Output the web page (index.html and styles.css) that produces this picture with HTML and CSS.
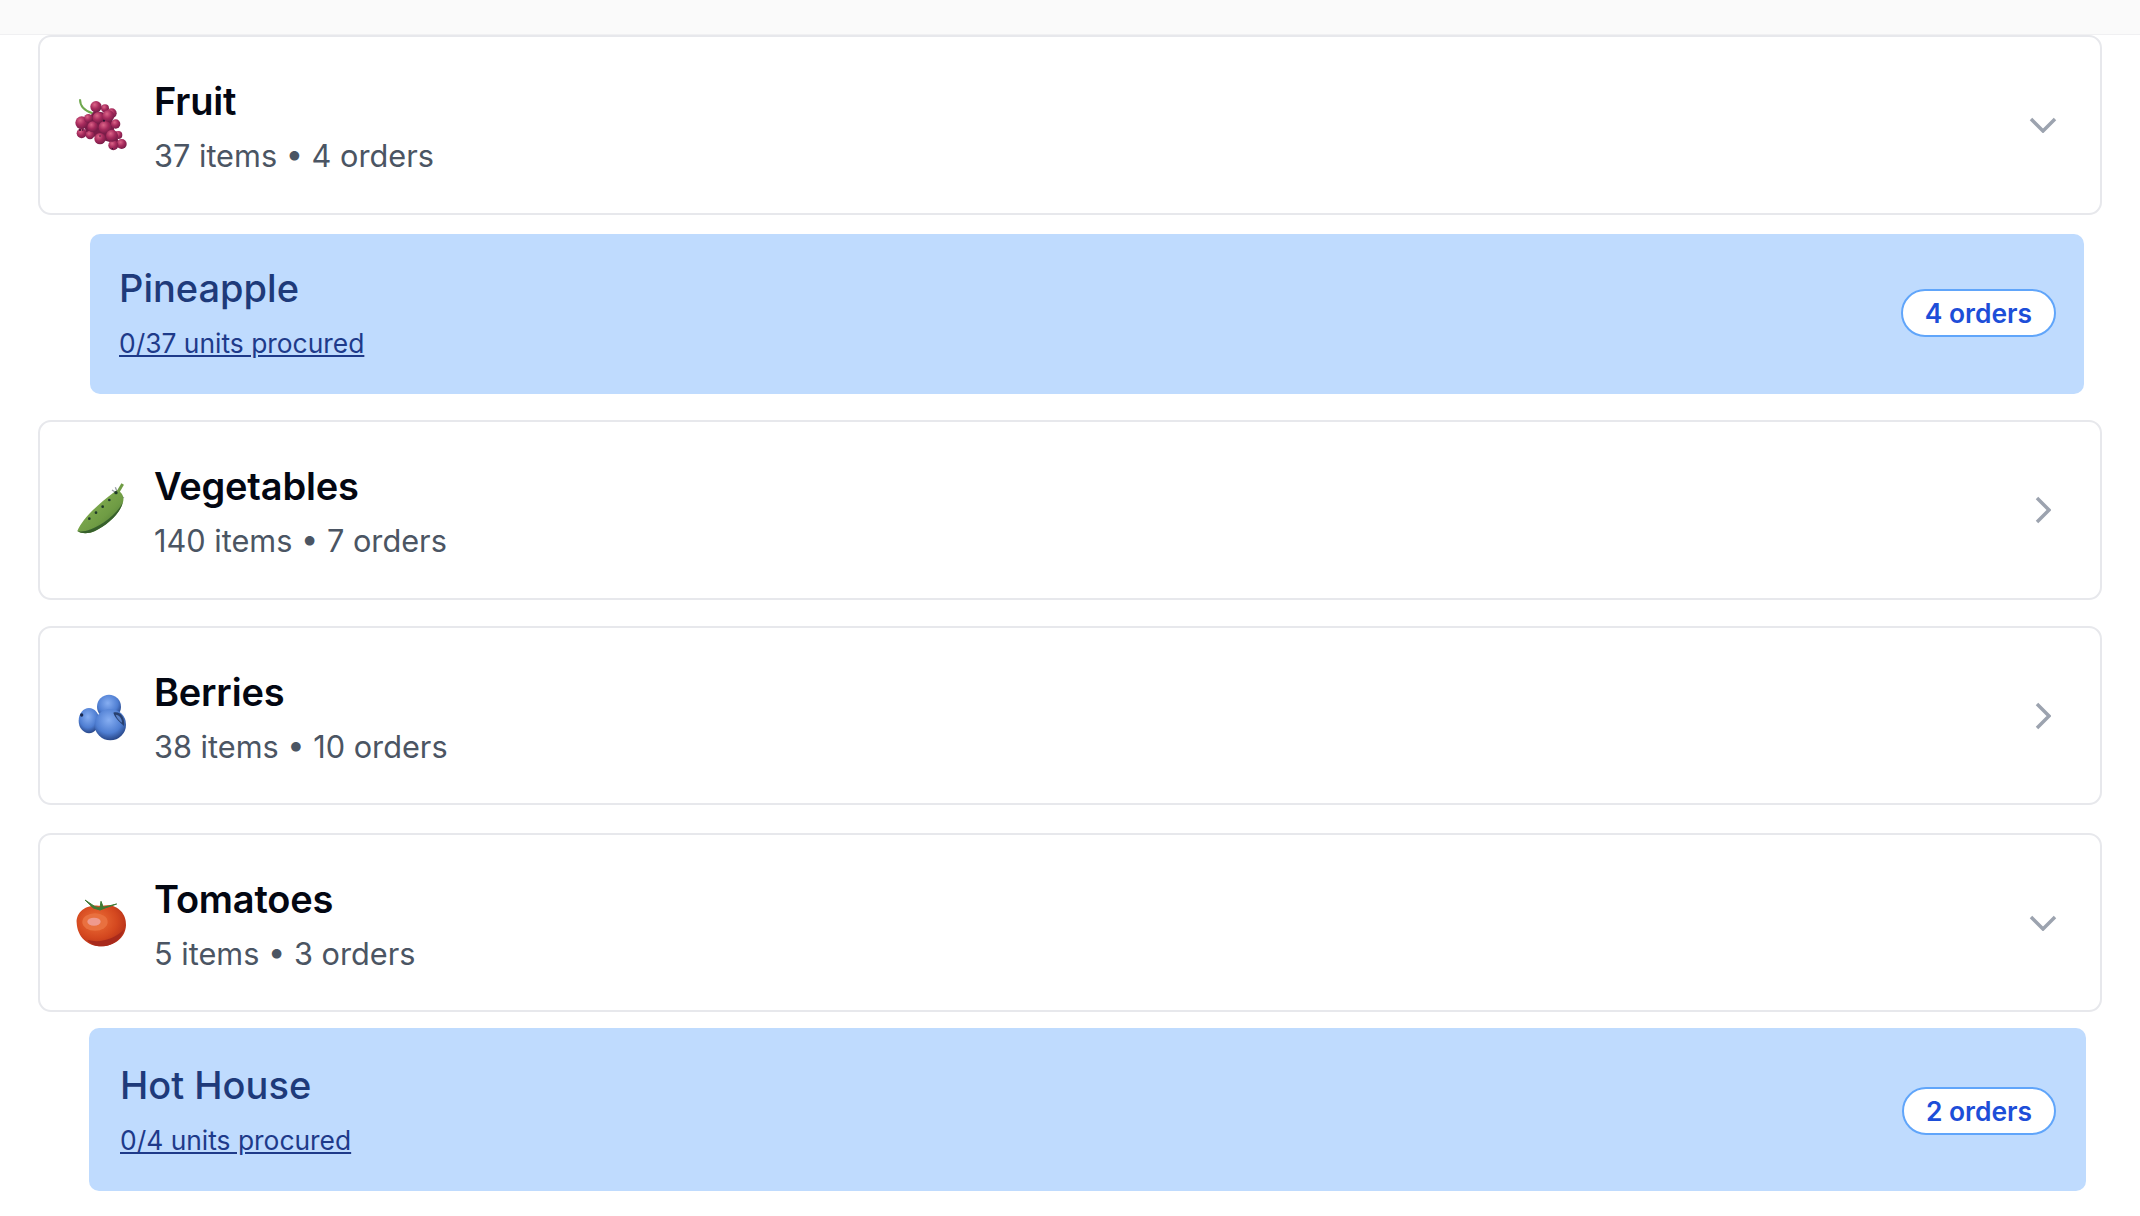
FILE: index.html
```html
<!DOCTYPE html>
<html lang="en">
<head>
    <meta charset="UTF-8">
    <meta name="viewport" content="width=device-width, initial-scale=1.0">
    <title>Procurement</title>
    <link rel="stylesheet" href="styles.css">
</head>
<body>
    <div class="topbar"></div>
    <div class="list">
        <div class="card card-fruit">
            <svg class="thumb" viewBox="60 45 180 180">
                <defs>
                    <radialGradient id="grape" cx="38%" cy="32%" r="75%">
                        <stop offset="0" stop-color="#dc6488"/>
                        <stop offset=".5" stop-color="#a62a5c"/>
                        <stop offset="1" stop-color="#6f1a44"/>
                    </radialGradient>
                    <radialGradient id="berry" cx="45%" cy="35%" r="70%">
                        <stop offset="0" stop-color="#86aef2"/>
                        <stop offset=".6" stop-color="#4f7ed2"/>
                        <stop offset="1" stop-color="#1f3a78"/>
                    </radialGradient>
                    <radialGradient id="tomato" cx="40%" cy="38%" r="70%">
                        <stop offset="0" stop-color="#ee7038"/>
                        <stop offset=".6" stop-color="#d4481f"/>
                        <stop offset="1" stop-color="#b02c18"/>
                    </radialGradient>
                    <linearGradient id="pod" x1="0" y1="0" x2="1" y2="1">
                        <stop offset="0" stop-color="#8fb85a"/>
                        <stop offset=".6" stop-color="#6f9c44"/>
                        <stop offset="1" stop-color="#3f6a2e"/>
                    </linearGradient>
                </defs>
                <path d="M90 58C90 76 100 92 128 100" fill="none" stroke="#6fa84e" stroke-width="6"/>
                <path d="M105 130L135 95L180 105L190 150L205 190L150 175L110 155Z" fill="#7a1c48" stroke="#7a1c48" stroke-width="6" stroke-linejoin="round"/>
                <g fill="url(#grape)">
                    <circle cx="95" cy="160" r="15"/>
                    <circle cx="120" cy="165" r="13"/>
                    <circle cx="150" cy="176" r="17"/>
                    <circle cx="215" cy="192" r="15"/>
                    <circle cx="190" cy="196" r="15"/>
                    <circle cx="205" cy="165" r="12"/>
                    <circle cx="165" cy="85" r="12"/>
                    <circle cx="197" cy="132" r="14"/>
                    <circle cx="185" cy="100" r="15"/>
                    <circle cx="138" cy="80" r="17"/>
                    <circle cx="95" cy="128" r="19"/>
                    <circle cx="115" cy="115" r="13"/>
                    <circle cx="128" cy="140" r="16"/>
                    <circle cx="145" cy="113" r="17"/>
                    <circle cx="175" cy="108" r="18"/>
                    <circle cx="165" cy="142" r="19"/>
                    <circle cx="186" cy="167" r="18"/>
                </g>
                <g fill="#2a1030">
                    <circle cx="162" cy="122" r="3"/>
                    <circle cx="90" cy="150" r="3"/>
                    <circle cx="98" cy="150" r="2"/>
                    <circle cx="150" cy="168" r="2"/>
                    <circle cx="187" cy="206" r="2"/>
                </g>
            </svg>
            <div class="card-text">
                <div class="card-title">Fruit</div>
                <div class="card-meta">37 items • 4 orders</div>
            </div>
            <svg class="chevron" viewBox="0 0 28 16"><path d="M2 2l12 12L26 2"/></svg>
        </div>
        <div class="group group-first">
            <div>
                <div class="group-title">Pineapple</div>
                <a class="group-link">0/37 units procured</a>
            </div>
            <span class="badge">4 orders</span>
        </div>

        <div class="card card-veg">
            <svg class="thumb" viewBox="60 30 180 180">
                <path d="M186 60l36 24M196 52l8 20" stroke="#9aa0a8" stroke-width="4" fill="none"/>
                <path d="M204 66L218 42" stroke="#6f9c44" stroke-width="9" fill="none"/>
                <path d="M82 183C95 150 140 105 190 68L202 60C214 66 224 78 219 97C210 132 170 166 135 183C115 192 95 192 82 183Z" fill="url(#pod)"/>
                <path d="M82 183C100 188 128 178 160 158C188 140 208 118 219 97C210 132 170 166 135 183C115 192 95 192 82 183Z" fill="#37602c"/>
                <g fill="#1f3a2a">
                    <circle cx="118" cy="146" r="4"/>
                    <circle cx="138" cy="128" r="4"/>
                    <circle cx="158" cy="110" r="4"/>
                    <circle cx="178" cy="90" r="4"/>
                    <circle cx="198" cy="68" r="5"/>
                </g>
            </svg>
            <div class="card-text">
                <div class="card-title">Vegetables</div>
                <div class="card-meta">140 items • 7 orders</div>
            </div>
            <svg class="chevron chevron-right" viewBox="0 0 16 28"><path d="M2 2l12 12L2 26"/></svg>
        </div>

        <div class="card card-berry">
            <svg class="thumb" viewBox="60 18 180 180">
                <circle cx="177" cy="80" r="36" fill="url(#berry)"/>
                <ellipse cx="117" cy="122" rx="31" ry="38" fill="url(#berry)"/>
                <circle cx="181" cy="134" r="47" fill="url(#berry)"/>
                <path d="M190 98C210 92 226 112 222 138C212 128 196 116 190 98Z" fill="#28406f"/>
                <path d="M197 104C208 104 216 116 216 128C208 122 200 114 197 104Z" fill="#5b82c8"/>
                <circle cx="95" cy="105" r="5" fill="#1a2a50"/>
            </svg>
            <div class="card-text">
                <div class="card-title">Berries</div>
                <div class="card-meta">38 items • 10 orders</div>
            </div>
            <svg class="chevron chevron-right" viewBox="0 0 16 28"><path d="M2 2l12 12L2 26"/></svg>
        </div>

        <div class="card card-tomato">
            <svg class="thumb" viewBox="60 21 180 180">
                <path d="M80 110C78 72 118 52 155 60C195 50 230 78 228 118C226 158 190 181 155 181C112 181 82 152 80 110Z" fill="url(#tomato)"/>
                <path d="M112 162C150 172 196 160 222 130C214 160 188 181 155 181C136 181 122 174 112 162Z" fill="#a82a1c"/>
                <ellipse cx="135" cy="108" rx="38" ry="26" fill="#e9703f"/>
                <ellipse cx="132" cy="107" rx="20" ry="12" fill="#ef9a8e"/>
                <path d="M105 42L135 62L150 66L153 46L160 64L200 54L165 66L150 72L130 66Z" fill="#3f7a34" stroke="#3f7a34" stroke-width="3" stroke-linejoin="round"/>
            </svg>
            <div class="card-text">
                <div class="card-title">Tomatoes</div>
                <div class="card-meta">5 items • 3 orders</div>
            </div>
            <svg class="chevron" viewBox="0 0 28 16"><path d="M2 2l12 12L26 2"/></svg>
        </div>
        <div class="group group-last">
            <div>
                <div class="group-title">Hot House</div>
                <a class="group-link">0/4 units procured</a>
            </div>
            <span class="badge">2 orders</span>
        </div>
    </div>
</body>
</html>
```

FILE: styles.css
```css
html, body {
    height: 100%;
}
body {
    margin: 0;
    background-color: #fff;
    font-family: Inter, 'Liberation Sans', sans-serif;
    overflow: hidden;
}
.topbar {
    height: 34px;
    background-color: #fafafa;
    border-bottom: 1px solid #f0f0f2;
}
.list {
    padding: 0 38px;
}
.card {
    display: flex;
    align-items: center;
    height: 180px;
    box-sizing: border-box;
    padding: 0 43px 0 30px;
    border: 2px solid #e7e8ec;
    border-radius: 13px;
    background-color: #fff;
}
.card-veg {
    margin-top: 26px;
}
.card-berry {
    height: 179px;
    margin-top: 26px;
}
.card-tomato {
    height: 179px;
    margin-top: 28px;
}
.thumb {
    width: 60px;
    height: 60px;
    flex: none;
}
.card-text {
    flex: 1;
    margin-left: 24px;
    padding-top: 5px;
}
.card-title {
    font-size: 38px;
    line-height: 48px;
    font-weight: 600;
    color: #030712;
    letter-spacing: -0.2px;
}
.card-meta {
    margin-top: 9px;
    font-size: 30.7px;
    line-height: 44px;
    color: #4b5563;
}
.chevron {
    width: 28px;
    height: 16px;
    flex: none;
}
.chevron-right {
    width: 16px;
    height: 28px;
    margin-right: 6px;
}
.chevron path {
    fill: none;
    stroke: #9ca3af;
    stroke-width: 3.5;
}
.group {
    display: flex;
    align-items: center;
    justify-content: space-between;
    box-sizing: border-box;
    border-radius: 10px;
    background-color: #bfdbfe;
}
.group-first {
    height: 160px;
    margin: 19px 18px 0 52px;
    padding: 0 28px 2px 29px;
}
.group-last {
    height: 163px;
    margin: 16px 16px 0 51px;
    padding: 2px 30px 0 31px;
}
.group-title {
    font-size: 38px;
    line-height: 48px;
    font-weight: 500;
    color: #1e3a7a;
}
.group-link {
    display: block;
    margin-top: 11px;
    font-size: 26.4px;
    line-height: 40px;
    color: #1e3a8a;
    text-decoration: underline;
}
.badge {
    box-sizing: border-box;
    height: 48px;
    padding: 0 22px;
    border: 2px solid #60a5fa;
    border-radius: 24px;
    background-color: #fff;
    font-size: 26.4px;
    line-height: 44px;
    font-weight: 600;
    color: #1d4ed8;
}
```
